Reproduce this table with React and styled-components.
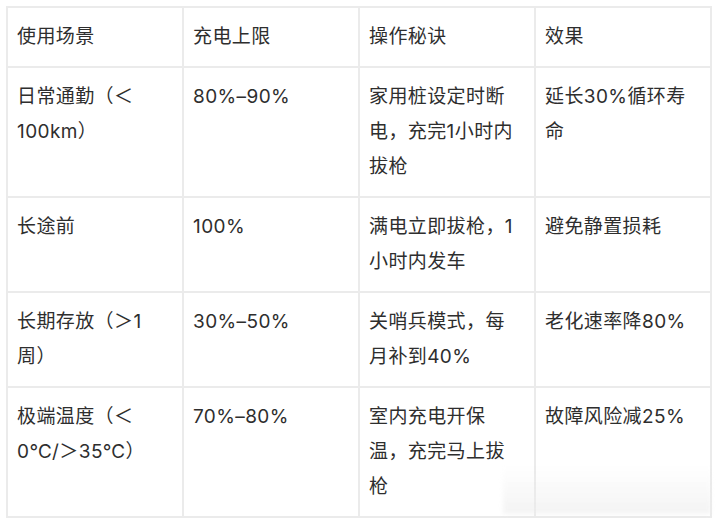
import styled, { createGlobalStyle } from "styled-components";

const GlobalStyle = createGlobalStyle`
  body {
    margin: 0;
    background: #fff;
  }
`;

const Page = styled.div`
  position: relative;
  padding: 6px 0 0 6px;
  width: 720px;
  height: 519px;
  box-sizing: border-box;
  overflow: hidden;
`;

const Table = styled.table`
  width: 706px;
  table-layout: fixed;
  border-collapse: collapse;
  font-family: Inter, "Noto Sans CJK SC", sans-serif;
  font-size: 19px;
  letter-spacing: 0.4px;
  color: #2e2e2e;
  text-spacing-trim: space-all;
`;

const Cell = styled.td`
  border: 2px solid #ebebeb;
  padding: 11px 10px 12px 9px;
  line-height: 35px;
  vertical-align: top;
  word-break: normal;
`;

const HeadCell = styled(Cell).attrs({ as: "th" })`
  font-weight: 400;
  text-align: left;
`;

const Fade = styled.div`
  position: absolute;
  left: 503px;
  top: 466px;
  width: 208px;
  height: 48px;
  background: linear-gradient(180deg, rgba(255, 255, 255, 0) 0%, rgba(236, 236, 236, 0.6) 100%);
  filter: blur(2px);
`;

const head = ["使用场景", "充电上限", "操作秘诀", "效果"];

const rows = [
  ["日常通勤（＜100km）", "80%–90%", "家用桩设定时断电，充完1小时内拔枪", "延长30%循环寿命"],
  ["长途前", "100%", "满电立即拔枪，1小时内发车", "避免静置损耗"],
  ["长期存放（＞1周）", "30%–50%", "关哨兵模式，每月补到40%", "老化速率降80%"],
  ["极端温度（＜0℃/＞35℃）", "70%–80%", "室内充电开保温，充完马上拔枪", "故障风险减25%"],
];

export default function App() {
  return (
    <Page>
      <GlobalStyle />
      <Table>
        <thead>
          <tr>
            {head.map(h => <HeadCell key={h}>{h}</HeadCell>)}
          </tr>
        </thead>
        <tbody>
          {rows.map((r, j) => (
            <tr key={j}>
              {r.map((c, i) => <Cell key={i}>{c}</Cell>)}
            </tr>
          ))}
        </tbody>
      </Table>
      <Fade />
    </Page>
  );
}
